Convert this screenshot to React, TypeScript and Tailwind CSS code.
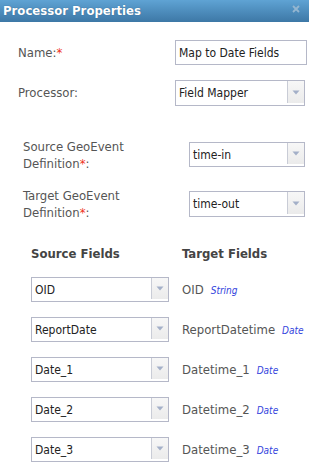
import React from "react";

const FONT = { fontFamily: '"DejaVu Sans Condensed", "DejaVu Sans", Tahoma, sans-serif' };

function Arrow() {
  return (
    <div className="w-[17px] self-stretch border-l border-[#c9ccd6] bg-gradient-to-b from-[#f7f7f7] to-[#ebebeb] flex items-center justify-center mb-[2px]">
      <svg width="8" height="5" viewBox="0 0 8 5">
        <path d="M0.5 0.5 L7.5 0.5 L4 4.5 Z" fill="#a3afc8" />
      </svg>
    </div>
  );
}

function Select({ value, className }: { value: string; className: string }) {
  return (
    <div className={`flex items-stretch border border-[#b5b8c8] bg-white ${className}`}>
      <div className="flex-1 flex items-center pl-[3px] text-[12px] text-[#222]">{value}</div>
      <Arrow />
    </div>
  );
}

const Req = () => <span className="text-[#ee3322]">*</span>;

export default function App() {
  const rows = [
    { src: "OID", tgt: "OID", type: "String" },
    { src: "ReportDate", tgt: "ReportDatetime", type: "Date" },
    { src: "Date_1", tgt: "Datetime_1", type: "Date" },
    { src: "Date_2", tgt: "Datetime_2", type: "Date" },
    { src: "Date_3", tgt: "Datetime_3", type: "Date" },
  ];
  return (
    <div style={FONT} className="w-[309px] h-[468px] bg-white overflow-hidden text-[#555]">
      <div className="h-[22px] bg-gradient-to-b from-[#5fa3d4] to-[#3d78a6] flex items-center justify-between pl-[3px] pr-[9px]">
        <span className="text-white font-bold text-[13px] [text-shadow:0_0_1px_#2a5a80]">Processor Properties</span>
        <svg width="8" height="8" viewBox="0 0 8 8" className="mt-[-4px]">
          <path d="M1 1 L7 7 M7 1 L1 7" stroke="#94b6d0" strokeWidth="1.8" />
        </svg>
      </div>

      <div className="flex items-center mt-[18px] h-[25px]">
        <div className="w-[175px] pl-[18px] text-[13px]">
          Name:<Req />
        </div>
        <div className="w-[132px] h-[25px] border border-[#b5b8c8] flex items-center pl-[3px] text-[12px] text-[#222]">
          Map to Date Fields
        </div>
      </div>

      <div className="flex items-center mt-[15px] h-[26px]">
        <div className="w-[175px] pl-[18px] text-[13px]">Processor:</div>
        <Select value="Field Mapper" className="w-[130px] h-[26px]" />
      </div>

      <div className="flex items-center mt-[36px] h-[25px]">
        <div className="w-[189px] pl-[23px] text-[13px] leading-[17px]">
          Source GeoEvent
          <br />
          Definition<Req />:
        </div>
        <Select value="time-in" className="w-[116px] h-[25px]" />
      </div>

      <div className="flex items-center mt-[24px] h-[26px]">
        <div className="w-[189px] pl-[23px] text-[13px] leading-[17px]">
          Target GeoEvent
          <br />
          Definition<Req />:
        </div>
        <Select value="time-out" className="w-[116px] h-[26px]" />
      </div>

      <div className="flex mt-[28px] text-[13px] font-bold text-[#444] leading-[17px]">
        <div className="w-[182px] pl-[31px]">Source Fields</div>
        <div>Target Fields</div>
      </div>

      <div className="flex flex-col gap-[15px] mt-[15px]">
        {rows.map((r) => (
          <div key={r.src} className="flex items-center h-[25px]">
            <div className="w-[182px] pl-[31px]">
              <Select value={r.src} className="w-[138px] h-[25px]" />
            </div>
            <div className="flex items-baseline whitespace-nowrap">
              <span className="text-[13px] text-[#555]">{r.tgt}</span>
              <span className="ml-[7px] text-[10px] italic text-[#3344dd]">{r.type}</span>
            </div>
          </div>
        ))}
      </div>
    </div>
  );
}
